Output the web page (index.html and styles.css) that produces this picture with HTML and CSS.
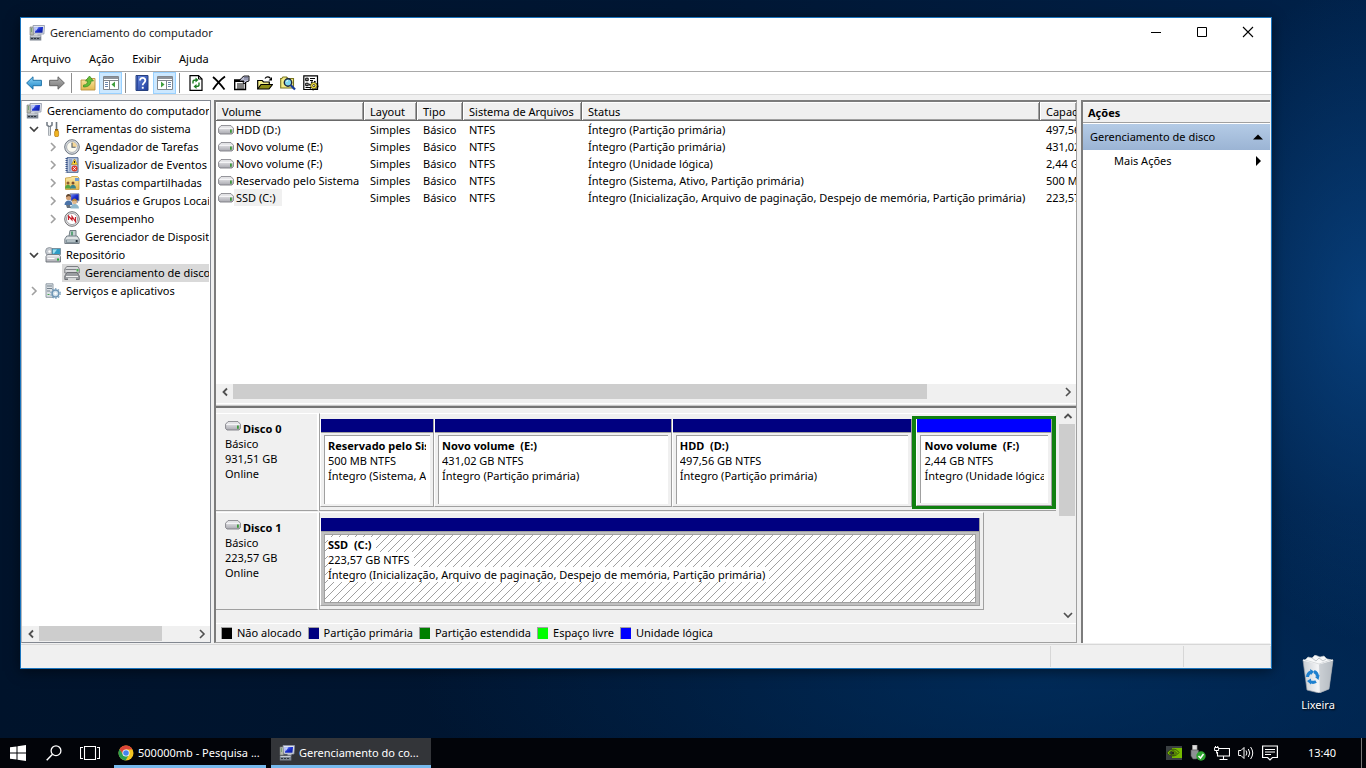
FILE: index.html
```html
<!DOCTYPE html>
<html lang="pt-BR">
<head>
<meta charset="utf-8">
<title>Gerenciamento do computador</title>
<link rel="stylesheet" href="styles.css">
</head>
<body>
<svg class="sprite" aria-hidden="true">
  <defs>
    <linearGradient id="g-drive" x1="0" y1="0" x2="0" y2="1"><stop offset="0" stop-color="#f4f4f6"/><stop offset="1" stop-color="#a9a9b0"/></linearGradient>
    <linearGradient id="g-screen" x1="0" y1="0" x2="1" y2="1"><stop offset="0" stop-color="#8fa4f5"/><stop offset=".5" stop-color="#1a2fd0"/><stop offset="1" stop-color="#0a1a90"/></linearGradient>
    <linearGradient id="g-back" x1="0" y1="0" x2="0" y2="1"><stop offset="0" stop-color="#8fd4f5"/><stop offset="1" stop-color="#1b86c9"/></linearGradient>
    <linearGradient id="g-fwd" x1="0" y1="0" x2="0" y2="1"><stop offset="0" stop-color="#b5b5b5"/><stop offset="1" stop-color="#777"/></linearGradient>
    <linearGradient id="g-folder" x1="0" y1="0" x2="0" y2="1"><stop offset="0" stop-color="#fbe9a6"/><stop offset="1" stop-color="#e3b94e"/></linearGradient>
    <linearGradient id="g-help" x1="0" y1="0" x2="1" y2="1"><stop offset="0" stop-color="#6a8be0"/><stop offset="1" stop-color="#1c3b9c"/></linearGradient>
    <linearGradient id="g-bin" x1="0" y1="0" x2="1" y2="0"><stop offset="0" stop-color="#c9ced3"/><stop offset=".5" stop-color="#f4f5f7"/><stop offset="1" stop-color="#aeb4ba"/></linearGradient>
  </defs>
  <symbol id="computer" viewBox="0 0 16 16">
    <path d="M1 2h3.500v8H1z" fill="#b4b8ac" stroke="#777" stroke-width=".6"/><path d="M2 4h1M2 6h1" stroke="#3c8a3c"/>
    <path d="M4 .5h11.500l-.6 8.500H5z" fill="#dfe4ee" stroke="#8b93a5" stroke-width=".8"/>
    <path d="M5.500 2H14l-.5 5.800H6z" fill="url(#g-screen)"/><path d="M6 2.200h3.500L6.400 6.500z" fill="#c6d0fb"/>
    <path d="M8.500 9h4v1.500h-4z" fill="#b2b9c4"/><path d="M.8 10.500h11.500v5H.8z" fill="#7c8591"/><path d="M1.500 11.500h10" stroke="#c8ced6"/><path d="M2 13.500h2m1 0h2m1 0h2" stroke="#2e363f"/>
  </symbol>
  <symbol id="tools" viewBox="0 0 16 16">
    <path d="M2 1v3.200L4.500 6 7 4.200V1" fill="none" stroke="#777f88" stroke-width="1.600"/><path d="M4.500 6v8.500" stroke="#7d858e" stroke-width="2.800"/><path d="M4.300 6v8" stroke="#e6eaee" stroke-width="1.200"/>
    <path d="M11.500 1v7" stroke="#6d757d" stroke-width="1.600"/><path d="M10 8h3.200v2H10z" fill="#8a5f14"/><rect x="9.600" y="9.500" width="4" height="6.200" rx="1.500" fill="#f0b523" stroke="#b67a12" stroke-width=".7"/>
  </symbol>
  <symbol id="clock" viewBox="0 0 16 16">
    <circle cx="8" cy="8" r="7.300" fill="#d9dde2" stroke="#6c747d" stroke-width="1"/><circle cx="8" cy="8" r="5.400" fill="#fbfaf0" stroke="#9aa0a8" stroke-width=".8"/><path d="M8 8h4.800A4.900 4.900 0 0 0 8 3z" fill="#f4d798"/><path d="M8 3.800V8.300h3.600" fill="none" stroke="#555d66" stroke-width="1.100"/>
  </symbol>
  <symbol id="events" viewBox="0 0 16 16">
    <path d="M3 .7h11v14.600H3z" fill="#bccbe2" stroke="#4d658f" stroke-width="1"/><path d="M2.500 1v14.500" stroke="#38538a" stroke-width="2" stroke-dasharray="1 1"/><path d="M5 3h3M5 5h3M5 7h3M5 9h2M5 11h2M5 13h2" stroke="#6b83b0"/><path d="M10.500 2l3 5.500h-6z" fill="#ffd630" stroke="#a8801a" stroke-width=".6"/><path d="M10.500 4v2" stroke="#222"/><circle cx="10.500" cy="11.500" r="3" fill="#d93a2b"/><path d="M9.300 10.300l2.400 2.400m0-2.400l-2.400 2.400" stroke="#fff"/>
  </symbol>
  <symbol id="shared" viewBox="0 0 16 16">
    <path d="M1.500 3l5-.5L8 1.500h5.500L15 3v11.500H1.500z" fill="url(#g-folder)" stroke="#c79a38" stroke-width=".8"/><circle cx="4" cy="8" r="1.500" fill="#8a5a30"/><path d="M1 13.500c0-5 6-5 6 0z" fill="#54a443"/><circle cx="9" cy="8" r="1.500" fill="#7d4e2b"/><path d="M6 13.500c0-5 6-5 6 0z" fill="#39848c"/><path d="M11 3h4v3h-4z" fill="#6f9bd4"/>
  </symbol>
  <symbol id="users" viewBox="0 0 16 16">
    <path d="M6 .8h9v7H7z" fill="url(#g-screen)" stroke="#8790a6" stroke-width=".9"/><path d="M10 8h4v2h-4z" fill="#a3abb7"/><circle cx="4.500" cy="4.500" r="2.600" fill="#d3a176"/><path d="M2 4c0-4 5-4 5 0l-2-1z" fill="#60452e"/><path d="M.5 12c0-6 8-6 8 0z" fill="#4a73a8"/><circle cx="10.500" cy="9" r="2.400" fill="#e2b98f"/><path d="M8 8.500c0-4 5-4 5 0l-2.500-1z" fill="#b38437"/><path d="M6.500 15.500c0-6 8.500-6 8.500 0z" fill="#8fb8cb"/><path d="M2 12h4l1 3H3z" fill="#68737e"/>
  </symbol>
  <symbol id="perf" viewBox="0 0 16 16">
    <circle cx="8" cy="8" r="7.300" fill="#e9e9ea" stroke="#6d6d70"/><circle cx="8" cy="8" r="5.600" fill="#fff" stroke="#909095" stroke-width=".8"/><path d="M4.500 9V5l3.500 4V5.500l3.500 5V6" fill="none" stroke="#c5202a" stroke-width="1.200"/>
  </symbol>
  <symbol id="device" viewBox="0 0 16 16">
    <path d="M5 7L6 1.500h6V7" fill="#c7d0d3" stroke="#68747a" stroke-width=".9"/><path d="M8 2.500v4" stroke="#37945a" stroke-width="1.500"/><path d="M.8 10l2-3h10.400l2 3v4.500H.8z" fill="#dfe3e5" stroke="#68727a" stroke-width=".9"/><path d="M1.500 10.500h13V14h-13z" fill="#83939b"/><path d="M3 12h8" stroke="#dfe9ec"/><path d="M12 11h1.500v2H12z" fill="#222d35"/>
  </symbol>
  <symbol id="storage" viewBox="0 0 16 16">
    <circle cx="4.500" cy="4.500" r="4" fill="#c4c9cf" stroke="#868d95" stroke-width=".8"/><circle cx="4.500" cy="4.500" r="1.200" fill="#fff"/><path d="M7 1.500h8.500v6H7z" fill="#2f9cc6" stroke="#72838e" stroke-width=".8"/><path d="M8 2.500h4l-3 4H8z" fill="#a1e0ef"/><path d="M1 9.500l1.500-2h11.500l1.500 2v5.500H1z" fill="url(#g-drive)" stroke="#70767d" stroke-width=".9"/><path d="M2.500 11.500h7" stroke="#fff"/><path d="M12 11.500h2v2h-2z" fill="#25ad38"/>
  </symbol>
  <symbol id="disks" viewBox="0 0 16 16">
    <path d="M.8 4l2-2.500h11L15.300 4v4H.8z" fill="#d7d8da" stroke="#737579" stroke-width=".9"/><path d="M1.500 4.500h11" stroke="#808388"/><path d="M12.500 4h2v2.500h-2z" fill="#4eae53"/><path d="M.8 11L3 7.500h10l2.300 3.500v3.500H.8z" fill="#9a9da1" stroke="#66696e" stroke-width=".9"/><path d="M2 11.500h12" stroke="#f3f3f3"/><path d="M4 13h8v2H4z" fill="#d7d9da"/>
  </symbol>
  <symbol id="services" viewBox="0 0 16 16">
    <path d="M1 .8h7v13.500H1z" fill="#dce1e5" stroke="#87939d" stroke-width=".9"/><path d="M2 3h5M2 5.500h5M2 8h3" stroke="#73808b"/><path d="M2.500 11.500h2" stroke="#4da453"/><circle cx="10.500" cy="10.500" r="3.400" fill="#cfdee9" stroke="#6d94b4" stroke-width="1.500"/><circle cx="10.500" cy="10.500" r="4.700" fill="none" stroke="#7198b7" stroke-width="1.200" stroke-dasharray="1.500 1.500"/><circle cx="10.500" cy="10.500" r="1.200" fill="#fff"/>
  </symbol>
  <symbol id="drive" viewBox="0 0 16 10">
    <path d="M3 .6h10l2.400 2.600v4.300L14 9H2L.6 7.500V3.200z" fill="url(#g-drive)" stroke="#7e7e84" stroke-width=".9"/><path d="M1.200 3.400h13.600" stroke="#fff" stroke-width=".8"/><path d="M12 4.500h1.800v3.300H12z" fill="#3c9a3a"/>
  </symbol>
  <symbol id="back" viewBox="0 0 16 14"><path d="M.6 7L7 .8v3.500h8.400v5.400H7v3.500z" fill="url(#g-back)" stroke="#2073a8"/></symbol>
  <symbol id="forward" viewBox="0 0 16 14"><path d="M15.400 7L9 .8v3.500H.6v5.400H9v3.500z" fill="url(#g-fwd)" stroke="#666"/></symbol>
  <symbol id="up" viewBox="0 0 16 16"><path d="M1 5h5l1.500-1.500H15V15H1z" fill="url(#g-folder)" stroke="#bb9140" stroke-width=".9"/><path d="M3.500 10c3 0 4-1.500 4-4H5.500L9.500 1l4 5h-2.500c0 4-3 6-7.500 6z" fill="#63bd37" stroke="#3a8820" stroke-width=".7"/></symbol>
  <symbol id="pane-left" viewBox="0 0 16 14"><path d="M.5.500h15v13H.5z" fill="#fff" stroke="#81868d"/><path d="M1 2h14" stroke="#8d939b" stroke-width="2"/><path d="M1 4.500h14M6.500 4.500V13" stroke="#81868d"/><path d="M2 6.500h3M2 8.500h3M2 10.500h3" stroke="#6a87ae"/><path d="M12 5.500v6L8.500 8.500z" fill="#3f9e3d"/></symbol>
  <symbol id="pane-right" viewBox="0 0 16 14"><path d="M.5.500h15v13H.5z" fill="#fff" stroke="#81868d"/><path d="M1 2h14" stroke="#8d939b" stroke-width="2"/><path d="M1 4.500h14M9.500 4.500V13" stroke="#81868d"/><path d="M11 6.500h3M11 8.500h3M11 10.500h3" stroke="#6a87ae"/><path d="M4 5.500v6l3.500-3z" fill="#3f9e3d"/></symbol>
  <symbol id="help" viewBox="0 0 16 16"><path d="M2 .5h12v15H2z" fill="url(#g-help)" stroke="#27407e"/><path d="M3.500 1v14" stroke="#2c499f"/><path d="M6 5.500c0-3.500 5.300-3.300 5.300 0C11.300 8 8.700 7.800 8.700 10.300" fill="none" stroke="#fff" stroke-width="1.800"/><path d="M7.800 11.800h1.900v1.900H7.800z" fill="#fff"/></symbol>
  <symbol id="refresh" viewBox="0 0 16 16"><path d="M2 .6h8.500L14 4v11.400H2z" fill="#fff" stroke="#000" stroke-width="1.200"/><path d="M10.500 .5V4H14" fill="none" stroke="#000"/><path d="M5 8.500V6.500q0-1.500 3-1.500M11 7.500v2.500q0 1.500-3 1.500" fill="none" stroke="#1c7d22" stroke-width="1.400"/><path d="M7.500 2.500v5l3-2.500zM8.500 9v5l-3-2.500z" fill="#1c7d22"/></symbol>
  <symbol id="delete" viewBox="0 0 16 16"><path d="M2 2C6 5 10 10 13.500 14.500M14 1.500C9 5 5 10 2 14.500" fill="none" stroke="#000" stroke-width="1.800"/></symbol>
  <symbol id="props" viewBox="0 0 16 16"><path d="M.7 5h10.800v9.500H.7z" fill="#fff" stroke="#000" stroke-width="1.400"/><path d="M1 6h10" stroke="#000" stroke-width="2"/><path d="M3 9h7M3 11h7M3 13h7" stroke="#000"/><path d="M5 6l3-3.500 2-1.500h5v5l-3 1-2 2-1-1 1-2z" fill="#b9bbd0" stroke="#000" stroke-width=".9"/><path d="M10 2.500h4M10 4h4" stroke="#666a86" stroke-width=".8"/></symbol>
  <symbol id="open" viewBox="0 0 16 16"><path d="M.7 14v-8.500h4.500L6.500 7h5.800v2.500" fill="#f5f08b" stroke="#000" stroke-width="1.200"/><path d="M.7 14L4 9.500h11.500L12 14z" fill="#8b8b16" stroke="#000" stroke-width="1.200"/><path d="M8 3.500c1.500-2.500 4.500-2 5.500 0" fill="none" stroke="#000" stroke-width="1.200"/><path d="M15 2v3.500h-3.500z"/></symbol>
  <symbol id="search-folder" viewBox="0 0 16 16"><path d="M.7 13V3.500h1L3 2h3.500L8 3.500h5.500V13z" fill="#f4ed86" stroke="#77731e" stroke-width="1.100"/><circle cx="8" cy="7.500" r="3.700" fill="#7fd8ef" stroke="#1c2740" stroke-width="1.400"/><path d="M6.500 6.500l1.500-1" stroke="#fff"/><path d="M10.800 10.300l4.200 4.200" stroke="#173b9b" stroke-width="2.300"/></symbol>
  <symbol id="settings" viewBox="0 0 16 16"><path d="M.8.800h13.700v13.700H.8z" fill="#fff" stroke="#000" stroke-width="1.200"/><path d="M2.700 3.200h2.500v2.500H2.700zM2.700 8.200h2.500v2.500H2.700z" fill="#aaa" stroke="#000"/><path d="M7 3.500h5M7 5.500h3M2.500 12.500h5" stroke="#000"/><circle cx="10.800" cy="10.600" r="4" fill="none" stroke="#000" stroke-width="1.600" stroke-dasharray="1.600 1.500"/><circle cx="10.800" cy="10.600" r="3.200" fill="#f2df40" stroke="#3a3502" stroke-width=".7"/><circle cx="10.800" cy="10.600" r="1.100" fill="#fff" stroke="#000" stroke-width=".7"/></symbol>
  <symbol id="chev-right" viewBox="0 0 10 10"><path d="M3 1l4 4-4 4" fill="none" stroke="currentColor" stroke-width="1.600"/></symbol>
  <symbol id="chev-left" viewBox="0 0 10 10"><path d="M7 1.500L3.500 5 7 8.500" fill="none" stroke="currentColor" stroke-width="1.800"/></symbol>
  <symbol id="chev-down" viewBox="0 0 10 10"><path d="M1 3l4 4 4-4" fill="none" stroke="currentColor" stroke-width="1.700"/></symbol>
  <symbol id="chev-up" viewBox="0 0 10 10"><path d="M1.500 7L5 3.500 8.500 7" fill="none" stroke="currentColor" stroke-width="1.800"/></symbol>
</svg>

<main class="desktop">
  <section class="window" aria-label="Gerenciamento do computador">
    <header class="titlebar">
      <svg class="icon"><use href="#computer"/></svg>
      <h1 class="title">Gerenciamento do computador</h1>
      <div class="controls">
        <button class="control" aria-label="Minimizar"><svg viewBox="0 0 12 12"><path d="M1 6.500h10" stroke="#000"/></svg></button>
        <button class="control" aria-label="Maximizar"><svg viewBox="0 0 12 12"><path d="M1.500 1.500h9v9h-9z" fill="none" stroke="#000"/></svg></button>
        <button class="control" aria-label="Fechar"><svg viewBox="0 0 12 12"><path d="M1 1l10 10M11 1L1 11" stroke="#000" stroke-width="1.100"/></svg></button>
      </div>
    </header>
    <nav class="menubar">
      <button>Arquivo</button><button>Ação</button><button>Exibir</button><button>Ajuda</button>
    </nav>
    <div class="toolbar">
      <button aria-label="Voltar"><svg class="icon"><use href="#back"/></svg></button>
      <button aria-label="Avançar"><svg class="icon"><use href="#forward"/></svg></button>
      <span class="sep"></span>
      <button aria-label="Subir um nível"><svg class="icon"><use href="#up"/></svg></button>
      <button class="on" aria-label="Árvore de console"><svg class="icon"><use href="#pane-left"/></svg></button>
      <span class="sep"></span>
      <button aria-label="Ajuda"><svg class="icon"><use href="#help"/></svg></button>
      <button class="on" aria-label="Painel de ações"><svg class="icon"><use href="#pane-right"/></svg></button>
      <span class="sep"></span>
      <button aria-label="Atualizar"><svg class="icon"><use href="#refresh"/></svg></button>
      <button aria-label="Excluir"><svg class="icon"><use href="#delete"/></svg></button>
      <button aria-label="Propriedades"><svg class="icon"><use href="#props"/></svg></button>
      <button aria-label="Abrir"><svg class="icon"><use href="#open"/></svg></button>
      <button aria-label="Explorar"><svg class="icon"><use href="#search-folder"/></svg></button>
      <button aria-label="Configurações"><svg class="icon"><use href="#settings"/></svg></button>
    </div>

    <div class="panes">
      <aside class="tree-pane">
        <ul class="tree">
          <li class="node root"><svg class="icon"><use href="#computer"/></svg><span>Gerenciamento do computador</span></li>
          <li class="node l1"><svg class="chev open"><use href="#chev-down"/></svg><svg class="icon"><use href="#tools"/></svg><span>Ferramentas do sistema</span></li>
          <li class="node l2"><svg class="chev"><use href="#chev-right"/></svg><svg class="icon"><use href="#clock"/></svg><span>Agendador de Tarefas</span></li>
          <li class="node l2"><svg class="chev"><use href="#chev-right"/></svg><svg class="icon"><use href="#events"/></svg><span>Visualizador de Eventos</span></li>
          <li class="node l2"><svg class="chev"><use href="#chev-right"/></svg><svg class="icon"><use href="#shared"/></svg><span>Pastas compartilhadas</span></li>
          <li class="node l2"><svg class="chev"><use href="#chev-right"/></svg><svg class="icon"><use href="#users"/></svg><span>Usuários e Grupos Locais</span></li>
          <li class="node l2"><svg class="chev"><use href="#chev-right"/></svg><svg class="icon"><use href="#perf"/></svg><span>Desempenho</span></li>
          <li class="node leaf"><svg class="icon"><use href="#device"/></svg><span>Gerenciador de Dispositivos</span></li>
          <li class="node l1"><svg class="chev open"><use href="#chev-down"/></svg><svg class="icon"><use href="#storage"/></svg><span>Repositório</span></li>
          <li class="node leaf selected"><svg class="icon"><use href="#disks"/></svg><span>Gerenciamento de disco</span></li>
          <li class="node l1"><svg class="chev"><use href="#chev-right"/></svg><svg class="icon"><use href="#services"/></svg><span>Serviços e aplicativos</span></li>
        </ul>
        <div class="hscroll"><button aria-label="Rolar para a esquerda"><svg><use href="#chev-left"/></svg></button><div class="track"><div class="thumb tree-thumb"></div></div><button aria-label="Rolar para a direita"><svg><use href="#chev-right"/></svg></button></div>
      </aside>

      <section class="center">
        <div class="list">
          <table class="volumes">
            <colgroup><col class="c-volume"><col class="c-layout"><col class="c-type"><col class="c-fs"><col class="c-status"><col></colgroup>
            <thead><tr><th>Volume</th><th>Layout</th><th>Tipo</th><th>Sistema de Arquivos</th><th>Status</th><th>Capacidade</th></tr></thead>
            <tbody>
              <tr><td><svg class="drive"><use href="#drive"/></svg><span>HDD (D:)</span></td><td>Simples</td><td>Básico</td><td>NTFS</td><td>Íntegro (Partição primária)</td><td>497,56 GB</td></tr>
              <tr><td><svg class="drive"><use href="#drive"/></svg><span>Novo volume (E:)</span></td><td>Simples</td><td>Básico</td><td>NTFS</td><td>Íntegro (Partição primária)</td><td>431,02 GB</td></tr>
              <tr><td><svg class="drive"><use href="#drive"/></svg><span>Novo volume (F:)</span></td><td>Simples</td><td>Básico</td><td>NTFS</td><td>Íntegro (Unidade lógica)</td><td>2,44 GB</td></tr>
              <tr><td><svg class="drive"><use href="#drive"/></svg><span>Reservado pelo Sistema</span></td><td>Simples</td><td>Básico</td><td>NTFS</td><td>Íntegro (Sistema, Ativo, Partição primária)</td><td>500 MB</td></tr>
              <tr class="current"><td><svg class="drive"><use href="#drive"/></svg><span>SSD (C:)</span></td><td>Simples</td><td>Básico</td><td>NTFS</td><td>Íntegro (Inicialização, Arquivo de paginação, Despejo de memória, Partição primária)</td><td>223,57 GB</td></tr>
            </tbody>
          </table>
        </div>
        <div class="hscroll"><button aria-label="Rolar para a esquerda"><svg><use href="#chev-left"/></svg></button><div class="track"><div class="thumb list-thumb"></div></div><button aria-label="Rolar para a direita"><svg><use href="#chev-right"/></svg></button></div>
        <div class="splitter"></div>
        <div class="graph">
          <div class="disks">
            <div class="disk">
              <div class="disk-label"><h2><svg class="drive"><use href="#drive"/></svg>Disco 0</h2><p>Básico</p><p>931,51 GB</p><p>Online</p></div>
              <div class="parts">
                <div class="part" style="width:15.5%"><div class="bar"></div><div class="info"><h3>Reservado pelo Sistema</h3><p>500 MB NTFS</p><p>Íntegro (Sistema, Ativo, Partição primária)</p></div></div>
                <div class="part" style="width:32.3%"><div class="bar"></div><div class="info"><h3>Novo volume &nbsp;(E:)</h3><p>431,02 GB NTFS</p><p>Íntegro (Partição primária)</p></div></div>
                <div class="part" style="width:32.7%"><div class="bar"></div><div class="info"><h3>HDD &nbsp;(D:)</h3><p>497,56 GB NTFS</p><p>Íntegro (Partição primária)</p></div></div>
                <div class="extended" style="width:19.5%"><div class="part logical"><div class="bar"></div><div class="info"><h3>Novo volume &nbsp;(F:)</h3><p>2,44 GB NTFS</p><p>Íntegro (Unidade lógica)</p></div></div></div>
              </div>
            </div>
            <div class="disk">
              <div class="disk-label"><h2><svg class="drive"><use href="#drive"/></svg>Disco 1</h2><p>Básico</p><p>223,57 GB</p><p>Online</p></div>
              <div class="parts small">
                <div class="part active"><div class="bar"></div><div class="info"><h3><span>SSD &nbsp;(C:)</span></h3><p><span>223,57 GB NTFS</span></p><p><span>Íntegro (Inicialização, Arquivo de paginação, Despejo de memória, Partição primária)</span></p></div></div>
              </div>
            </div>
          </div>
          <div class="vscroll"><button aria-label="Rolar para cima"><svg><use href="#chev-up"/></svg></button><div class="track"><div class="thumb"></div></div><button aria-label="Rolar para baixo"><svg><use href="#chev-down"/></svg></button></div>
        </div>
        <ul class="legend">
          <li><i class="sw free"></i>Não alocado</li><li><i class="sw primary"></i>Partição primária</li><li><i class="sw ext"></i>Partição estendida</li><li><i class="sw space"></i>Espaço livre</li><li><i class="sw logic"></i>Unidade lógica</li>
        </ul>
      </section>

      <aside class="actions">
        <h2>Ações</h2>
        <button class="group">Gerenciamento de disco<svg viewBox="0 0 10 10"><path d="M0 7.500h10L5 2.500z"/></svg></button>
        <button class="more">Mais Ações<svg viewBox="0 0 10 10"><path d="M3 0v10l5-5z"/></svg></button>
      </aside>
    </div>
    <footer class="statusbar"><span></span><span></span><span></span></footer>
  </section>

  <a class="shortcut" href="#lixeira" id="lixeira">
    <svg viewBox="0 0 34 38"><path d="M2 5l4 30 12 3 10-4 4-29-14-2z" fill="url(#g-bin)" stroke="#9da4ab" stroke-width=".7"/><path d="M18 8l1 30 9-4 4-29z" fill="#b8bec5" opacity=".65"/><path d="M2 5l16 4 14-4" fill="none" stroke="#fff"/><path d="M4 5l3-3 4 1 3-3 5 2 4-1 3 3 4 1-12 4z" fill="#f7f8f9" stroke="#c3c7cb" stroke-width=".6"/><path d="M11 3l4 3 3-3 4 3 3-2" fill="none" stroke="#b5babf" stroke-width=".8"/><path d="M6.500 22a5.500 5.500 0 0 1 3.500-5M13 16.500a5.500 5.500 0 0 1 3.500 5M15 26.500a6 6 0 0 1-6 0" fill="none" stroke="#1e80cf" stroke-width="3"/><path d="M9 14l4 2.500-3 3.500zM18.500 20l-1 5-3.500-3zM10 29.500l-4-3.500 4-2.500z" fill="#1e80cf"/></svg>
    <span>Lixeira</span>
  </a>
</main>

<footer class="taskbar">
  <button class="sys" aria-label="Iniciar"><svg viewBox="0 0 16 16"><path d="M0 2.300L6.500 1.400v6.100H0zM7.500 1.300L16 0v7.500H7.500zM0 8.500h6.500v6.100L0 13.700zM7.500 8.500H16V16l-8.500-1.300z" fill="#fff"/></svg></button>
  <button class="sys" aria-label="Pesquisar"><svg viewBox="0 0 16 16"><circle cx="10" cy="5.700" r="4.900" fill="none" stroke="#fff" stroke-width="1.300"/><path d="M6.500 9.300L.7 15.200" stroke="#fff" stroke-width="1.500"/></svg></button>
  <button class="sys" aria-label="Visão de tarefas"><svg class="wide" viewBox="0 0 20 16"><path d="M4.500 1.500h11v13h-11zM3 2.500H.5v11H3M17 2.500h2.500v11H17" fill="none" stroke="#fff" stroke-width="1.100"/></svg></button>
  <button class="task"><svg viewBox="0 0 16 16"><circle cx="8" cy="8" r="7.500" fill="#f2c422"/><path d="M1.500 4.200A7.500 7.500 0 0 1 14.500 4.500H8L5 9.500z" fill="#dc4437"/><path d="M1.500 4.200A7.500 7.500 0 0 0 7.500 15.500L10.800 10 5 9.500z" fill="#2d9f50"/><circle cx="8" cy="8" r="3.600" fill="#fff"/><circle cx="8" cy="8" r="2.800" fill="#4384ee"/></svg><span>500000mb - Pesquisa ...</span></button>
  <button class="task current"><svg><use href="#computer"/></svg><span>Gerenciamento do co...</span></button>
  <div class="tray">
    <button aria-label="NVIDIA"><svg viewBox="0 0 16 16"><path d="M0 1h16v14H0z" fill="#3a4042"/><path d="M6 3h10v10H6z" fill="#75b900"/><path d="M1 8c3-5 9-5 12-.5C10 12 4 12 1 8zM3.500 8c2 3 5 3 7 0-2-3-5-3-7 0z" fill="#75b900" stroke="#2c3a12" stroke-width=".8"/><circle cx="7" cy="8" r="1.500" fill="#253010"/></svg></button>
    <button aria-label="Remover hardware"><svg viewBox="0 0 16 16"><path d="M2.500 0h4.500v5H2.500z" fill="#ddd" stroke="#999" stroke-width=".7"/><path d="M1 5h7.500v6l-2 3H3l-2-3z" fill="#8d9194" stroke="#555" stroke-width=".6"/><circle cx="11" cy="11" r="4.700" fill="#2ca42f"/><path d="M8.500 11l2 2 3-4" fill="none" stroke="#fff" stroke-width="1.500"/></svg></button>
    <button aria-label="Rede"><svg viewBox="0 0 16 16"><path d="M5 3.500h10.500v7.500H3.500V7M9.500 11v3.500M5.500 14.500h8" fill="none" stroke="#fff" stroke-width="1.100"/><path d="M.6 2.500h4v3h-4zM1.500 2.500V1M3.700 2.500V1M2.600 5.500v3" fill="none" stroke="#fff"/></svg></button>
    <button aria-label="Volume"><svg viewBox="0 0 16 16"><path d="M.6 5.500H3l3-3v11l-3-3H.6z" fill="none" stroke="#fff"/><path d="M8 5.500q1.800 2.500 0 5M10.300 4q3 4 0 8M12.600 2q4.300 6 0 12" fill="none" stroke="#fff"/></svg></button>
    <button aria-label="Central de ações"><svg viewBox="0 0 16 16"><path d="M.6 1h14.800v11.500h-5L8 15l-2.400-2.500h-5z" fill="none" stroke="#fff" stroke-width="1.200"/><path d="M3 4.500h10M3 7h10M3 9.500h6" stroke="#fff"/></svg></button>
    <time>13:40</time>
    <button class="peek" aria-label="Mostrar área de trabalho"></button>
  </div>
</footer>
</body>
</html>
```
FILE: styles.css
```css
* { box-sizing: border-box; }

html, body { height: 100%; }

body {
  margin: 0;
  display: flex;
  flex-direction: column;
  overflow: hidden;
  font: 11px/16px "Noto Sans", "Open Sans", sans-serif;
  color: #000;
  background: #00142e;
}

button {
  margin: 0;
  padding: 0;
  border: 0;
  background: none;
  font: inherit;
  color: inherit;
  text-align: left;
}

ul { margin: 0; padding: 0; list-style: none; }
h1, h2, h3, p { margin: 0; font-size: 11px; }
h1 { font-weight: 400; }

.sprite { position: absolute; width: 0; height: 0; }
.icon { flex: none; width: 16px; height: 16px; }
.drive { flex: none; width: 16px; height: 10px; }

/* Desktop */
.desktop {
  flex: 1;
  position: relative;
  background:
    radial-gradient(ellipse 190px 330px at 100% 42%, rgba(10, 72, 138, .75), transparent),
    radial-gradient(ellipse 620px 190px at 76% 92%, rgba(0, 52, 104, .6), transparent),
    linear-gradient(90deg, #00132b, #001734 50%, #002149);
}

.window {
  position: absolute;
  inset: 17px 94px 69px 20px;
  display: flex;
  flex-direction: column;
  border: 1px solid #1a74bd;
  background: #fff;
  box-shadow: 0 2px 12px rgba(0, 0, 0, .5);
}

.titlebar { display: flex; align-items: center; height: 30px; padding-left: 8px; }
.title { flex: 1; padding-left: 5px; color: #222; }
.controls { display: flex; align-self: flex-start; }
.control { width: 46px; height: 28px; display: grid; place-items: center; }
.control svg { width: 12px; height: 12px; }

.menubar { display: flex; height: 24px; padding-left: 1px; border-bottom: 1px solid #a9a9a9; }
.menubar button { padding: 0 9px 1px; }

.toolbar { display: flex; height: 23px; padding-left: 1px; border-bottom: 1px solid #d9d9d9; }
.toolbar button { width: 23px; display: grid; place-items: center; }
.toolbar .on { background: #cce8ff; border: 1px solid #99d1ff; }
.toolbar .sep { width: 1px; margin: 1px 4px 1px 3px; background: #8d8d8d; }

.panes {
  flex: 1;
  min-height: 0;
  display: flex;
  padding: 5px 1px 1px 0;
  background: #f0f0f0;
}

/* Console tree */
.tree-pane {
  flex: none;
  width: 190px;
  display: flex;
  flex-direction: column;
  border: 1px solid #828790;
  border-left-color: #b5b8bd;
  background: #fff;
}
.tree { flex: 1; padding: 1px 1px 0 0; overflow: hidden; }
.node { display: flex; align-items: center; height: 18px; overflow: hidden; white-space: nowrap; }
.node span { padding-left: 5px; }
.chev { flex: none; width: 10px; height: 10px; color: #a0a0a0; }
.chev.open { color: #404040; }
.root { padding-left: 4px; }
.l1 { padding-left: 7px; }
.l1 .icon { margin-left: 6px; }
.l2 { padding-left: 26px; }
.l2 .icon { margin-left: 6px; }
.leaf { margin-left: 40px; padding-left: 2px; }
.selected { background: #d9d9d9; }

/* Scroll bars */
.hscroll, .vscroll { display: flex; flex: none; background: #f0f0f0; color: #505050; }
.hscroll { height: 16px; }
.vscroll { flex-direction: column; width: 16px; margin-right: 1px; }
.hscroll button, .vscroll button { width: 17px; height: 16px; display: grid; place-items: center; }
.hscroll svg, .vscroll svg { width: 10px; height: 10px; }
.track { flex: 1; }
.thumb { background: #cdcdcd; }
.hscroll .thumb { height: 15px; }
.tree-thumb { width: 80%; }
.list-thumb { width: 84%; }
.vscroll .thumb { height: 50%; }

/* Volumes list */
.center {
  flex: 1;
  min-width: 0;
  display: flex;
  flex-direction: column;
  margin: 0 4px 0 3px;
  border: 1px solid #a0a0a0;
  border-width: 2px 1px 1px 2px;
  border-top-color: #7c7c7c;
  border-left-color: #7c7c7c;
  background: #f0f0f0;
}
.list { flex: 1; min-height: 0; overflow: hidden; background: #fff; }
.volumes { width: 100%; table-layout: fixed; border-collapse: separate; border-spacing: 0; }
.c-volume { width: 148px; }
.c-layout { width: 53px; }
.c-type { width: 46px; }
.c-fs { width: 119px; }
.c-status { width: 458px; }
.volumes th, .volumes td { padding: 0 0 0 6px; overflow: hidden; white-space: nowrap; text-align: left; font-weight: 400; text-overflow: clip; }
.volumes th {
  height: 19px;
  padding-top: 2px;
  background: #f0f0f0;
  border-right: 1px solid #696969;
  border-bottom: 1px solid #696969;
  box-shadow: inset 1px 1px #fff, inset -1px -1px #a0a0a0;
}
.volumes th:last-child { border-right: 0; }
.volumes td { height: 17px; line-height: 17px; }
.volumes td:first-child { display: flex; align-items: center; padding-left: 2px; }
.volumes td span { padding: 0 7px 0 2px; }
.current td span { background: #f0f0f0; }

.splitter { flex: none; height: 8px; border-top: 3px solid #f0f0f0; border-bottom: 2px solid #747474; background: linear-gradient(#fff 1px, #f0f0f0 1px 2px, #c8c8c8 2px); }

/* Disk map */
.graph { flex: none; display: flex; }
.disks { flex: 1; min-width: 0; display: flex; flex-direction: column; gap: 1px; padding: 5px 0 13px; }
.disk { display: flex; height: 98px; }
.disk-label { flex: none; width: 103px; padding: 7px 0 0 9px; border-top: 1px solid #fff; border-right: 2px solid #fff; border-bottom: 1px solid #a0a0a0; line-height: 15px; }
.disk-label h2 { display: flex; align-items: flex-start; }
.disk-label .drive { margin-right: 2px; }
.parts {
  flex: 1;
  min-width: 0;
  display: flex;
  margin-right: 3px;
  padding: 2px 0 1px;
  border: solid #a0a0a0;
  border-width: 1px 0 1px 1px;
  border-top-color: #fff;
}
.parts.small { flex: 0 0 665px; padding-right: 3px; border-right-width: 1px; }
.part {
  min-width: 0;
  display: flex;
  flex-direction: column;
  margin: 3px 0 2px;
  border: solid #a0a0a0;
  border-width: 0 1px 1px;
  border-left-color: #fff;
}
.bar { height: 14px; background: #000080; border-bottom: 1px solid #a0a0a0; }
.info { flex: 1; margin: 2px 3px; padding: 2px 4px 0 3px; border: solid #a0a0a0; border-width: 1px 0 0 1px; background: #fff; line-height: 15px; white-space: nowrap; }
.info h3, .info p { overflow: hidden; }
.extended { min-width: 0; display: flex; border: 3px solid #108010; border-width: 3px 4px; }
.extended .part { flex: 1; margin: 0; }
.logical .bar { background: #0000ff; }
.active { flex: 1; background: #c0c0c0; }
.active .info {
  border-width: 1px;
  background: linear-gradient(135deg, #fff 46%, #a0a0a0 46% 54%, #fff 54%) 0 0 / 8px 8px;
}
.active .info span { background: #fff; padding-right: 4px; }

.legend { flex: none; display: flex; gap: 6px; height: 19px; padding-left: 5px; border-top: 1px solid #fff; }
.legend li { display: flex; align-items: center; gap: 5px; }
.sw { width: 11px; height: 12px; border: 1px solid #a0a0a0; border-width: 1px 0 0 1px; }
.free { background: #000; }
.primary { background: #000080; }
.ext { background: #008000; }
.space { background: #00ff00; }
.logic { background: #0000ff; }

/* Actions */
.actions {
  flex: none;
  width: 189px;
  display: flex;
  flex-direction: column;
  border: solid #7c7c7c;
  border-width: 2px 0 0 2px;
  background: #fff;
}
.actions h2 { height: 21px; padding: 2px 0 0 5px; background: #f0f0f0; border-bottom: 1px solid #a0a0a0; border-top: 1px solid #fff; }
.actions button { display: flex; align-items: center; justify-content: space-between; }
.actions svg { width: 10px; height: 10px; margin-right: 7px; }
.group { height: 26px; margin-top: 1px; padding-left: 7px; background: linear-gradient(#b4cbe6, #9bb4d4); }
.more { height: 22px; padding-left: 31px; }

.statusbar { flex: none; display: flex; justify-content: flex-end; height: 24px; border-top: 1px solid #d7d7d7; background: #f0f0f0; }
.statusbar span { width: 133px; margin: 1px 0; border-right: 1px solid #d7d7d7; }
.statusbar span:last-child { width: 87px; }

/* Desktop shortcut */
.shortcut {
  position: absolute;
  right: 18px;
  bottom: 25px;
  width: 60px;
  display: flex;
  flex-direction: column;
  align-items: center;
  gap: 4px;
  color: #fff;
  text-decoration: none;
  text-shadow: 1px 1px 2px #000;
}
.shortcut svg { width: 34px; height: 38px; }

/* Taskbar */
.taskbar { flex: none; display: flex; height: 30px; background: #020409; color: #fff; }
.taskbar button { display: grid; place-items: center; }
.taskbar svg { width: 16px; height: 16px; }
.taskbar .wide { width: 20px; }
.sys { width: 36px; }
.taskbar .task {
  display: flex;
  align-items: center;
  gap: 4px;
  width: 152px;
  margin: 0 5px 0 6px;
  padding-left: 4px;
  border-bottom: 3px solid #76b9ed;
  white-space: nowrap;
}
.taskbar .task svg { margin-top: 3px; }
.taskbar .task span { padding-top: 3px; }
.taskbar .current { width: 160px; margin: 0; padding-left: 8px; background: #333539; }
.tray { flex: 1; display: flex; align-items: center; justify-content: flex-end; }
.tray button { width: 24px; height: 30px; }
.tray time { width: 53px; margin-left: 26px; }
.tray .peek { width: 5px; border-left: 1px solid #777; }
```
